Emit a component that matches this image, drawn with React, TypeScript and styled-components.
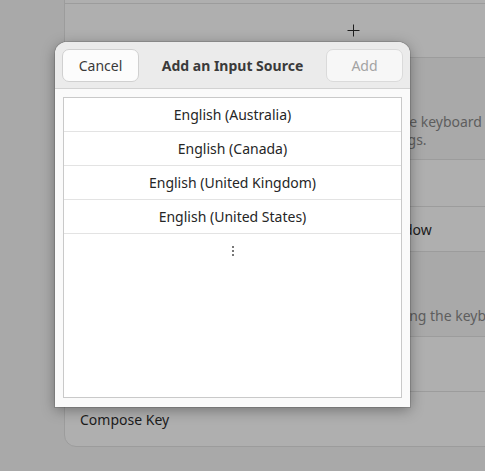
import { FC } from "react";
import styled, { createGlobalStyle } from "styled-components";

const GlobalStyle = createGlobalStyle`
    html, body {
        margin: 0;
        padding: 0;
        background: #a9a9a9;
        overflow: hidden;
        font-family: "Noto Sans", "DejaVu Sans", sans-serif;
    }
`;

const Screen = styled.div`
    position: relative;
    width: 485px;
    height: 471px;
    overflow: hidden;
    background: #a9a9a9;
`;

// settings page behind the dialog, scrolled a little
const Column = styled.div`
    width: 620px;
    margin-top: -20px;
    padding-left: 64px;
    display: flex;
    flex-direction: column;
`;

const Card = styled.div`
    background: #afafaf;
    border: 1px solid #9c9c9c;
    border-radius: 12px;
    display: flex;
    flex-direction: column;
    overflow: hidden;
`;

const Row = styled.div<{ $h: number }>`
    height: ${p => p.$h}px;
    display: flex;
    align-items: center;
    padding: 0 15px;
    font-size: 14px;
    color: #1c1c1c;
    white-space: nowrap;
    & + & {
        border-top: 1px solid #9c9c9c;
    }
`;

const AddRow = styled(Row)`
    justify-content: center;
    padding-left: 0;
    padding-right: 0;
    width: 576px;
`;

const Section = styled.div<{ $h: number; $pb: number }>`
    height: ${p => p.$h}px;
    display: flex;
    flex-direction: column;
    justify-content: flex-end;
    padding-bottom: ${p => p.$pb}px;
    box-sizing: border-box;
`;

const Heading = styled.div`
    font-size: 14px;
    font-weight: bold;
    color: #1c1c1c;
    margin-bottom: 8px;
`;

const Desc = styled.div`
    font-size: 14px;
    line-height: 18px;
    color: #5e5e5e;
    white-space: nowrap;
`;

const Radio = styled.span`
    width: 14px;
    height: 14px;
    border-radius: 50%;
    border: 1px solid #8a8a8a;
    margin-right: 10px;
    flex: none;
`;

const Overlay = styled.div`
    position: absolute;
    left: 55px;
    top: 42px;
    width: 355px;
    height: 365px;
    background: #fafafa;
    border-radius: 12px 12px 0 0;
    box-shadow: 0 3px 14px rgba(0, 0, 0, 0.35), 0 0 0 1px rgba(0, 0, 0, 0.12);
    display: flex;
    flex-direction: column;
    overflow: hidden;
`;

const Header = styled.div`
    height: 46px;
    background: #ebebeb;
    border-bottom: 1px solid #d2d2d2;
    display: flex;
    align-items: center;
    justify-content: space-between;
    padding: 0 7px;
    flex: none;
`;

const Button = styled.button<{ $disabled?: boolean }>`
    width: 77px;
    height: 33px;
    border-radius: 7px;
    border: 1px solid ${p => (p.$disabled ? "#dadada" : "#d0d0d0")};
    background: ${p => (p.$disabled ? "#f7f7f7" : "#fcfcfc")};
    color: ${p => (p.$disabled ? "#a3a3a3" : "#3a3a3a")};
    font-family: inherit;
    font-size: 14px;
    padding: 0;
`;

const Title = styled.div`
    font-size: 14px;
    font-weight: bold;
    color: #3a3a3a;
`;

const Body = styled.div`
    flex: 1;
    padding: 8px 8px 9px 8px;
    display: flex;
`;

const List = styled.div`
    flex: 1;
    background: #ffffff;
    border: 1px solid #c9c9c9;
    display: flex;
    flex-direction: column;
`;

const Item = styled.div`
    height: 33px;
    display: flex;
    align-items: center;
    justify-content: center;
    font-size: 14px;
    color: #262626;
    border-bottom: 1px solid #e3e3e3;
    flex: none;
`;

const MoreItem = styled(Item)`
    border-bottom: none;
`;

const PlusIcon: FC = () => (
    <svg width="13" height="13" viewBox="0 0 13 13">
        <path d="M6.5 0.5v12M0.5 6.5h12" stroke="#1e1e1e" strokeWidth="1" />
    </svg>
);

const MoreIcon: FC = () => (
    <svg width="4" height="12" viewBox="0 0 4 12">
        <rect x="1" y="1" width="2" height="2" fill="#777" />
        <rect x="1" y="5" width="2" height="2" fill="#777" />
        <rect x="1" y="9" width="2" height="2" fill="#777" />
    </svg>
);

const sources = [
    "English (Australia)",
    "English (Canada)",
    "English (United Kingdom)",
    "English (United States)",
];

const App: FC = () => {
    return (
        <Screen>
            <GlobalStyle />
            <Column>
                <Card>
                    <Row $h={22} />
                    <AddRow $h={53}>
                        <PlusIcon />
                    </AddRow>
                </Card>
                <Section $h={101} $pb={10}>
                    <Heading>Input Source Switching</Heading>
                    <Desc>Input sources can be switched using the Super+Space keyboard</Desc>
                    <Desc>shortcut. This can be changed in the keyboard settings.</Desc>
                </Section>
                <Card>
                    <Row $h={46}>
                        <Radio />
                        Use the same source for all windows
                    </Row>
                    <Row $h={44}>
                        <Radio />
                        Switch input sources individually for each window
                    </Row>
                </Card>
                <Section $h={84} $pb={11}>
                    <Heading>Special Character Entry</Heading>
                    <Desc>Methods for entering symbols and letter variants using the keyboard.</Desc>
                </Section>
                <Card>
                    <Row $h={54}>Alternate Characters Key</Row>
                    <Row $h={54}>Compose Key</Row>
                </Card>
            </Column>

            <Overlay>
                <Header>
                    <Button>Cancel</Button>
                    <Title>Add an Input Source</Title>
                    <Button $disabled>Add</Button>
                </Header>
                <Body>
                    <List>
                        {sources.map(s => (
                            <Item key={s}>{s}</Item>
                        ))}
                        <MoreItem>
                            <MoreIcon />
                        </MoreItem>
                    </List>
                </Body>
            </Overlay>
        </Screen>
    );
};

export default App;
